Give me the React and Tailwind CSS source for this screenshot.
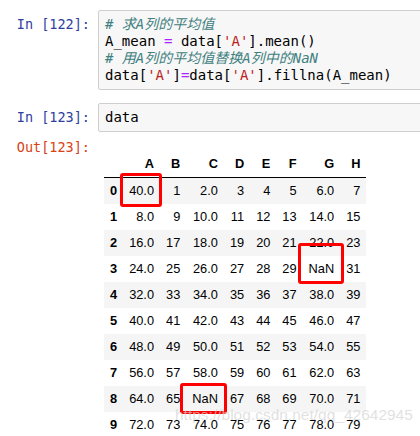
const mono = { fontFamily: '"DejaVu Sans Mono", "Noto Sans CJK SC", monospace' };

const cols = ["A", "B", "C", "D", "E", "F", "G", "H"];
const floatCols = ["A", "C", "G"];

const rows = Array.from({ length: 10 }, (_, r) =>
  cols.map((c, i) => {
    if (r === 0 && c === "A") return "40.0";
    if (r === 3 && c === "G") return "NaN";
    if (r === 8 && c === "C") return "NaN";
    const v = r * 8 + i;
    return floatCols.includes(c) ? `${v}.0` : `${v}`;
  })
);

// red annotation boxes, keyed by "row-col"
const marks = {
  "0-0": "-left-[3px] -right-[2px] -top-[5px] -bottom-[3px]",
  "3-6": "-left-[5px] -right-[4px] -top-[13px] -bottom-[2px]",
  "8-2": "-left-[6px] -right-[3px] -top-[3px] -bottom-[2px]",
};

function Prompt({ children, out }) {
  return (
    <div
      className={`w-[98px] shrink-0 pr-[8px] text-right text-[13.5px] leading-[17px] ${
        out ? "text-[#D84315]" : "text-[#303F9F]"
      }`}
      style={mono}
    >
      {children}
    </div>
  );
}

function CodeBox({ children }) {
  return (
    <div
      className="flex-1 -mr-[6px] rounded-[2px] border border-[#cfcfcf] bg-[#f7f7f7] px-[6px] py-[5px] text-[14px] leading-[17px] text-black whitespace-pre"
      style={mono}
    >
      {children}
    </div>
  );
}

const Cm = ({ children }) => <span className="italic text-[#408080]">{children}</span>;
const Str = ({ children }) => <span className="text-[#BA2121]">{children}</span>;
const Op = ({ children }) => <span className="text-[#AA22FF]">{children}</span>;

export default function App() {
  return (
    <div className="relative w-[420px] h-[436px] overflow-hidden bg-white">
      <div className="pt-[10px]">
        <div className="flex">
          <div className="pt-[6px]">
            <Prompt>In [122]:</Prompt>
          </div>
          <CodeBox>
            <div>
              <Cm># 求A列的平均值</Cm>
            </div>
            <div>
              A_mean <Op>=</Op> data[<Str>'A'</Str>].mean()
            </div>
            <div>
              <Cm># 用A列的平均值替换A列中的NaN</Cm>
            </div>
            <div>
              data[<Str>'A'</Str>]<Op>=</Op>data[<Str>'A'</Str>].fillna(A_mean)
            </div>
          </CodeBox>
        </div>

        <div className="mt-[13px] flex">
          <div className="pt-[6px]">
            <Prompt>In [123]:</Prompt>
          </div>
          <CodeBox>
            <div>data</div>
          </CodeBox>
        </div>

        <div className="mt-[7px] flex">
          <Prompt out>Out[123]:</Prompt>
          <div className="pt-[12px] pl-[6px]">
            <table
              className="border-collapse text-[12.8px] leading-[14px] text-black"
              style={{ fontFamily: '"Liberation Sans", Arial, sans-serif' }}
            >
              <thead>
                <tr className="border-b border-black">
                  <th className="px-[6px] py-[6px]"></th>
                  {cols.map((c) => (
                    <th key={c} className="px-[6px] py-[6px] text-right font-bold">
                      {c}
                    </th>
                  ))}
                </tr>
              </thead>
              <tbody>
                {rows.map((row, r) => (
                  <tr key={r} className={r % 2 === 0 ? "bg-[#f5f5f5]" : "bg-white"}>
                    <th className="px-[6px] py-[6px] text-right font-bold">{r}</th>
                    {row.map((v, i) => (
                      <td key={i} className="relative px-[6px] py-[6px] text-right">
                        {v}
                        {marks[`${r}-${i}`] && (
                          <span
                            className={`absolute ${marks[`${r}-${i}`]} rounded-[3px] border-[3px] border-[#ff0000]`}
                          />
                        )}
                      </td>
                    ))}
                  </tr>
                ))}
              </tbody>
            </table>
          </div>
        </div>
      </div>

      <div
        className="absolute left-[175px] top-[406px] text-[15.5px] leading-[18px] text-[#d4d4d4]/70 whitespace-nowrap"
        style={{ fontFamily: '"Liberation Sans", Arial, sans-serif' }}
      >
        https://blog.csdn.net/qq_42642945
      </div>
    </div>
  );
}
